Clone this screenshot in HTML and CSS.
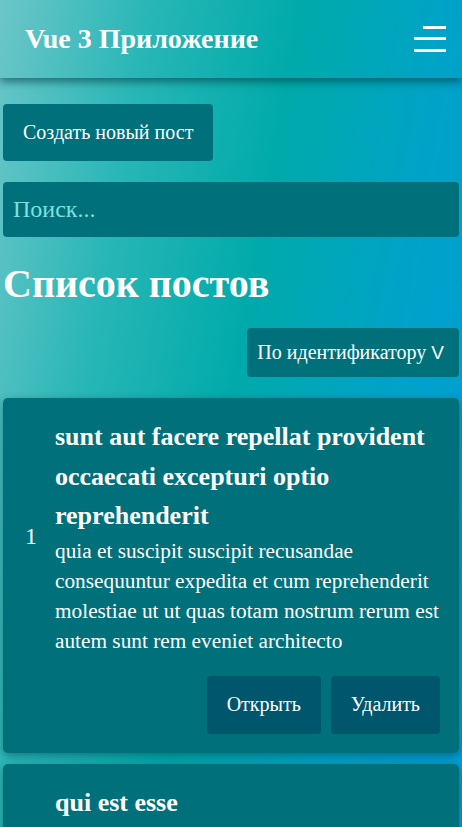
FILE: index.html
```html
<!DOCTYPE html>
<html lang="ru">
<head>
<meta charset="utf-8">
<title>Vue 3 Приложение</title>
<link rel="stylesheet" href="styles.css">
</head>
<body>
<header class="navbar">
  <div class="brand">Vue 3 Приложение</div>
  <button class="burger" aria-label="Меню">
    <span class="line line-short"></span>
    <span class="line"></span>
    <span class="line"></span>
  </button>
</header>
<main class="page">
  <div class="toolbar">
    <button class="btn btn-create">Создать новый пост</button>
  </div>
  <input class="search" type="text" placeholder="Поиск...">
  <h1 class="title">Список постов</h1>
  <div class="sort-row">
    <button class="btn btn-sort">По идентификатору <span class="chev">V</span></button>
  </div>
  <div class="posts">
    <article class="post">
      <div class="post-main">
        <div class="post-id">1</div>
        <div class="post-content">
          <h3 class="post-title">sunt aut facere repellat provident occaecati excepturi optio reprehenderit</h3>
          <p class="post-body">quia et suscipit suscipit recusandae consequuntur expedita et cum reprehenderit molestiae ut ut quas totam nostrum rerum est autem sunt rem eveniet architecto</p>
        </div>
      </div>
      <div class="post-actions">
        <button class="btn btn-dark">Открыть</button>
        <button class="btn btn-dark">Удалить</button>
      </div>
    </article>
    <article class="post">
      <div class="post-main">
        <div class="post-id">2</div>
        <div class="post-content">
          <h3 class="post-title">qui est esse</h3>
          <p class="post-body">est rerum tempore vitae sequi sint nihil reprehenderit dolor beatae ea dolores neque fugiat blanditiis voluptate porro vel nihil molestiae ut reiciendis qui aperiam non debitis possimus qui neque nisi nulla</p>
        </div>
      </div>
      <div class="post-actions">
        <button class="btn btn-dark">Открыть</button>
        <button class="btn btn-dark">Удалить</button>
      </div>
    </article>
  </div>
</main>
</body>
</html>
```
FILE: styles.css
```css
html, body {
  margin: 0;
  padding: 0;
}
body {
  font-family: "Liberation Serif", "Times New Roman", serif;
  color: #fff;
  min-height: 100vh;
  background: linear-gradient(100deg, #6cc6c8 0%, #28b6b6 25%, #00aaaa 50%, #00a3c8 75%, #009cd8 100%) fixed;
}
.navbar {
  height: 78px;
  display: flex;
  align-items: center;
  justify-content: space-between;
  padding: 0 16px 0 25px;
  box-shadow: 0 4px 8px rgba(0, 60, 70, 0.6);
  box-sizing: border-box;
}
.brand {
  font-size: 28px;
  font-weight: bold;
}
.burger {
  width: 32px;
  height: 26px;
  padding: 0;
  border: none;
  background: transparent;
  display: flex;
  flex-direction: column;
  justify-content: space-between;
  align-items: flex-end;
  margin-top: -1px;
}
.line {
  display: block;
  width: 32px;
  height: 3px;
  background: #fff;
}
.line-short {
  width: 23px;
}
.page {
  padding: 26px 3px 0;
  display: flex;
  flex-direction: column;
}
.btn {
  font-family: inherit;
  color: #fff;
  border: none;
  border-radius: 4px;
  cursor: pointer;
}
.btn-create {
  background: #00707a;
  font-size: 20px;
  height: 57px;
  padding: 0 20px;
}
.search {
  margin-top: 21px;
  height: 55px;
  box-sizing: border-box;
  border: none;
  border-radius: 4px;
  background: #00707a;
  padding: 0 10px;
  font-family: inherit;
  font-size: 24px;
  color: #fff;
  outline: none;
}
.search::placeholder {
  color: #7ee0e0;
}
.title {
  margin: 24px 0 0;
  font-size: 40px;
  line-height: 46px;
  font-weight: bold;
}
.sort-row {
  display: flex;
  justify-content: flex-end;
  margin-top: 21px;
}
.btn-sort {
  background: #00707a;
  font-size: 20px;
  height: 49px;
  padding: 0 15px 0 10px;
}
.chev {
  font-family: "Liberation Sans", Arial, sans-serif;
  font-size: 19px;
}
.posts {
  margin-top: 21px;
  display: flex;
  flex-direction: column;
  gap: 11px;
}
.post {
  background: #00707a;
  border-radius: 5px;
  padding: 19px 19px 19px 22px;
  box-shadow: 0 3px 8px rgba(0, 50, 60, 0.45);
  display: flex;
  flex-direction: column;
}
.post-main {
  display: flex;
  align-items: center;
}
.post-id {
  width: 30px;
  flex: none;
  font-size: 24px;
}
.post-content {
  flex: 1;
}
.post-title {
  margin: 0;
  font-size: 26px;
  line-height: 39.5px;
  font-weight: bold;
}
.post-body {
  margin: 0;
  font-size: 21.3px;
  line-height: 30px;
}
.post-actions {
  display: flex;
  justify-content: flex-end;
  gap: 10px;
  margin-top: 20px;
}
.btn-dark {
  background: #00566c;
  font-size: 20px;
  height: 58px;
  padding: 0 20px;
}
```
